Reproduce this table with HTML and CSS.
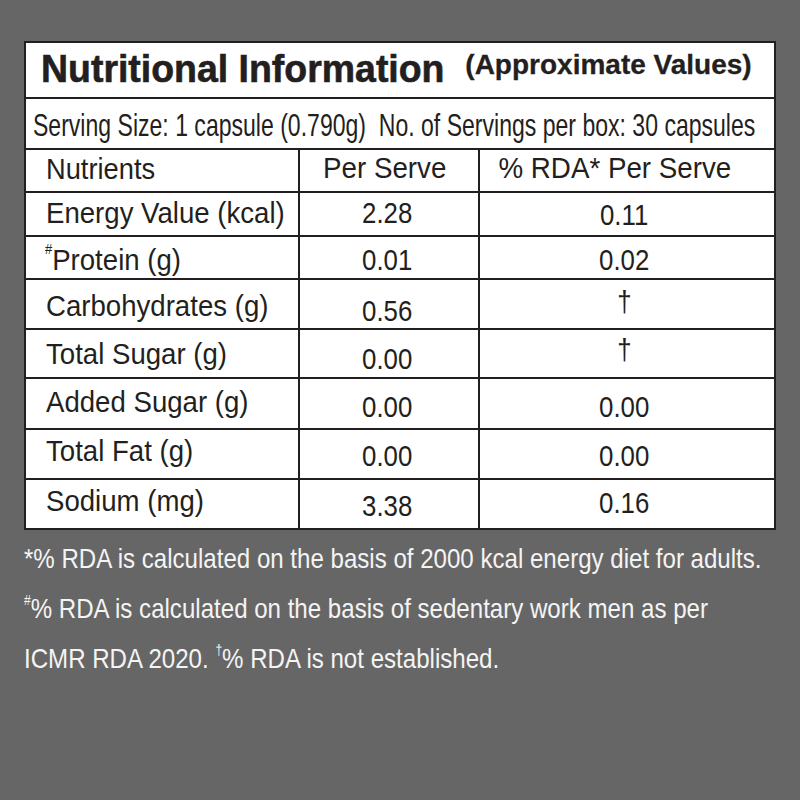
FILE: index.html
```html
<!DOCTYPE html>
<html lang="en">
<head>
<meta charset="utf-8">
<title>Nutritional Information</title>
<link rel="stylesheet" href="styles.css">
</head>
<body>
<div class="panel">
  <div class="row title-row">
    <h1 class="title"><span>Nutritional Information</span></h1>
    <span class="approx">(Approximate Values)</span>
  </div>
  <div class="row serving-row">
    <span class="serving">Serving Size: 1 capsule (0.790g)&nbsp; No. of Servings per box: 30 capsules</span>
  </div>
  <div class="row grid r-head">
    <div class="cell c1"><span>Nutrients</span></div>
    <div class="cell c2"><span>Per Serve</span></div>
    <div class="cell c3"><span>% RDA* Per Serve</span></div>
  </div>
  <div class="row grid r-energy">
    <div class="cell c1"><span>Energy Value (kcal)</span></div>
    <div class="cell c2"><span>2.28</span></div>
    <div class="cell c3"><span>0.11</span></div>
  </div>
  <div class="row grid r-protein">
    <div class="cell c1"><span><sup>#</sup>Protein (g)</span></div>
    <div class="cell c2"><span>0.01</span></div>
    <div class="cell c3"><span>0.02</span></div>
  </div>
  <div class="row grid r-carbs">
    <div class="cell c1"><span>Carbohydrates (g)</span></div>
    <div class="cell c2"><span>0.56</span></div>
    <div class="cell c3"><span>†</span></div>
  </div>
  <div class="row grid r-tsugar">
    <div class="cell c1"><span>Total Sugar (g)</span></div>
    <div class="cell c2"><span>0.00</span></div>
    <div class="cell c3"><span>†</span></div>
  </div>
  <div class="row grid r-asugar">
    <div class="cell c1"><span>Added Sugar (g)</span></div>
    <div class="cell c2"><span>0.00</span></div>
    <div class="cell c3"><span>0.00</span></div>
  </div>
  <div class="row grid r-tfat">
    <div class="cell c1"><span>Total Fat (g)</span></div>
    <div class="cell c2"><span>0.00</span></div>
    <div class="cell c3"><span>0.00</span></div>
  </div>
  <div class="row grid r-sodium">
    <div class="cell c1"><span>Sodium (mg)</span></div>
    <div class="cell c2"><span>3.38</span></div>
    <div class="cell c3"><span>0.16</span></div>
  </div>
</div>
<div class="notes">
  <p><span>*% RDA is calculated on the basis of 2000 kcal energy diet for adults.</span></p>
  <p><span><sup>#</sup>% RDA is calculated on the basis of sedentary work men as per</span></p>
  <p><span>ICMR RDA 2020. <sup>†</sup>% RDA is not established.</span></p>
</div>
</body>
</html>
```
FILE: styles.css
```css
html, body {
  margin: 0;
  padding: 0;
}
body {
  background: #666666;
  width: 800px;
  height: 800px;
  font-family: "Liberation Sans", Arial, sans-serif;
  color: #231f20;
  overflow: hidden;
}

.panel {
  width: 748px;
  margin: 41px 0 0 24px;
  border: 2px solid #231f20;
  background: #ffffff;
}

.row {
  border-bottom: 2px solid #231f20;
  white-space: nowrap;
  overflow: hidden;
}
.row:last-child {
  border-bottom: 0;
}

/* title */
.title-row {
  height: 54px;
  display: flex;
  align-items: flex-start;
  padding-left: 15px;
}
.title {
  margin: 0;
  padding-top: 6px;
  font-size: 39px;
  line-height: 39px;
  font-weight: 700;
  -webkit-text-stroke: 0.6px #231f20;
}
.title span {
  display: inline-block;
  transform: scaleX(0.96);
  transform-origin: 0 50%;
}
.approx {
  margin-left: 4px;
  padding-top: 8px;
  font-size: 28px;
  line-height: 28px;
  font-weight: 700;
  -webkit-text-stroke: 0.3px #231f20;
}

/* serving */
.serving-row {
  height: 49px;
  padding-left: 7px;
  box-sizing: content-box;
}
.serving {
  display: inline-block;
  padding-top: 10px;
  font-size: 32px;
  line-height: 32px;
  transform: scaleX(0.72);
  transform-origin: 0 50%;
}

/* grid rows */
.grid {
  display: grid;
  grid-template-columns: 274px 180px 294px;
}
.cell {
  box-sizing: border-box;
  font-size: 30px;
  line-height: 30px;
  overflow: hidden;
}
.cell span {
  display: inline-block;
}
.c1, .c2 {
  border-right: 2px solid #231f20;
}
.c1 {
  padding-left: 20px;
}
.c1 span {
  transform: scaleX(0.92);
  transform-origin: 0 50%;
}
.c2, .c3 {
  text-align: center;
}
.c2 span, .c3 span {
  transform: scaleX(0.86);
  transform-origin: 50% 50%;
}
.c2 {
  padding-right: 3px;
}
.c3 {
  padding-right: 6px;
}

sup {
  font-size: 14px;
  line-height: 0;
  vertical-align: 16px;
}

/* header row */
.r-head { height: 41px; }
.r-head .c1 { font-size: 29px; line-height: 29px; padding-top: 5px; }
.r-head .c1 span { transform: scaleX(0.94); }
.r-head .c2, .r-head .c3 { padding-top: 3px; }
.r-head .c2 span, .r-head .c3 span { transform: scaleX(0.925); }
.r-head .c2 { padding-right: 8px; }
.r-head .c3 { padding-right: 24px; }

.r-energy { height: 42px; }
.r-energy .c1 { padding-top: 5px; }
.r-energy .c2 { padding-top: 5px; }
.r-energy .c3 { padding-top: 7px; }

.r-protein { height: 41px; }
.r-protein .c1 { padding-top: 8px; padding-left: 19px; }
.r-protein .c2 { padding-top: 8px; }
.r-protein .c3 { padding-top: 8px; }

.r-carbs { height: 48px; }
.r-carbs .c1 { padding-top: 11px; }
.r-carbs .c2 { padding-top: 16px; }
.r-carbs .c3 { padding-top: 7px; }

.r-tsugar { height: 47px; }
.r-tsugar .c1 { padding-top: 9px; }
.r-tsugar .c2 { padding-top: 14px; }
.r-tsugar .c3 { padding-top: 5px; }

.r-asugar { height: 49px; }
.r-asugar .c1 { padding-top: 8px; }
.r-asugar .c2 { padding-top: 13px; }
.r-asugar .c3 { padding-top: 13px; }

.r-tfat { height: 48px; }
.r-tfat .c1 { padding-top: 6px; }
.r-tfat .c2 { padding-top: 11px; }
.r-tfat .c3 { padding-top: 11px; }

.r-sodium { height: 48px; }
.r-sodium .c1 { padding-top: 6px; }
.r-sodium .c2 { padding-top: 11px; }
.r-sodium .c3 { padding-top: 8px; }

/* notes */
.notes {
  margin: 4px 0 0 24px;
  color: #f4f4f4;
  font-size: 28px;
  line-height: 50px;
}
.notes p {
  margin: 0;
  white-space: nowrap;
  overflow: hidden;
}
.notes p span {
  display: inline-block;
  transform: scaleX(0.86);
  transform-origin: 0 50%;
}
.notes sup {
  font-size: 14px;
  vertical-align: 13px;
}
```
